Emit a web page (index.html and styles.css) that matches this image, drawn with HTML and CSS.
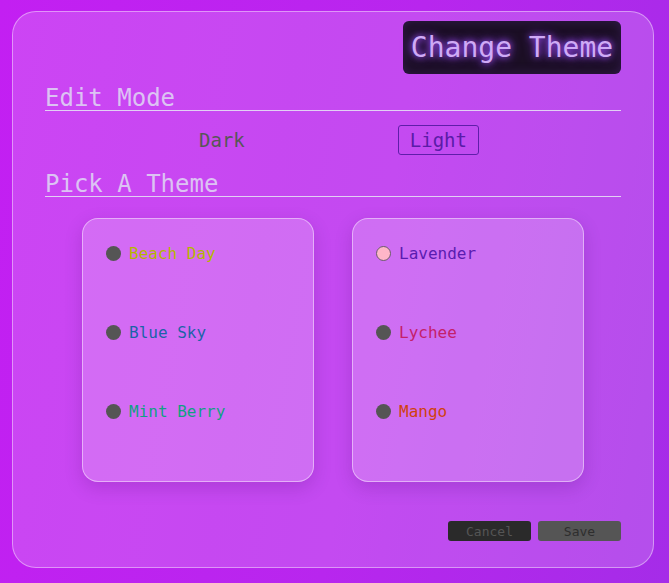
FILE: index.html
```html
<!DOCTYPE html>
<html>
<head>
<meta charset="utf-8">
<link rel="stylesheet" href="styles.css">
</head>
<body>
<div class="panel">
  <div class="top">
    <button class="change">Change Theme</button>
  </div>
  <h2 class="heading">Edit Mode</h2>
  <div class="modes">
    <button class="mode">Dark</button>
    <button class="mode active">Light</button>
  </div>
  <h2 class="heading pick">Pick A Theme</h2>
  <div class="cards">
    <div class="card">
      <div class="item"><span class="dot"></span><span class="beach">Beach Day</span></div>
      <div class="item"><span class="dot"></span><span class="sky">Blue Sky</span></div>
      <div class="item"><span class="dot"></span><span class="mint">Mint Berry</span></div>
    </div>
    <div class="card">
      <div class="item"><span class="dot sel"></span><span class="lav">Lavender</span></div>
      <div class="item"><span class="dot"></span><span class="lychee">Lychee</span></div>
      <div class="item"><span class="dot"></span><span class="mango">Mango</span></div>
    </div>
  </div>
  <div class="footer">
    <button class="btn cancel">Cancel</button>
    <button class="btn save">Save</button>
  </div>
</div>
</body>
</html>
```
FILE: styles.css
```css
* { box-sizing: border-box; }
html, body { height: 100%; }
body {
  margin: 0;
  padding: 11px 15px 15px 12px;
  background: linear-gradient(100deg, #c31ff2 0%, #b826ee 55%, #a52ce8 100%);
  font-family: "DejaVu Sans Mono", "Liberation Mono", monospace;
}
.panel {
  height: 557px;
  border: 1px solid rgba(255,255,255,0.42);
  border-radius: 24px;
  background: rgba(255,255,255,0.17);
  padding: 9px 32px 26px;
  display: flex;
  flex-direction: column;
}
.top { display: flex; justify-content: flex-end; }
button { font-family: inherit; cursor: pointer; }
.change {
  width: 218px;
  height: 53px;
  border: none;
  border-radius: 6px;
  background: #1b0f24;
  color: #cfaaf6;
  font-size: 28px;
  padding: 0;
  text-shadow: 0 0 6px #a552ff, 0 0 12px #8a3af0;
  box-shadow: inset 0 0 12px rgba(120,60,200,0.25);
}
.heading {
  margin: 12px 0 0;
  font-weight: normal;
  font-size: 24px;
  line-height: 24px;
  color: #dcc3f3;
  border-bottom: 1px solid #e2d0f4;
}
.modes {
  display: flex;
  justify-content: center;
  gap: 141px;
  margin-top: 14px;
}
.mode {
  height: 30px;
  padding: 0 11px;
  font-size: 19px;
  background: transparent;
  border: 1px solid transparent;
  border-radius: 3px;
  color: #575757;
}
.mode.active {
  color: #5a1ca8;
  border-color: #5f1eaa;
}
.heading.pick { margin-top: 17px; }
.cards {
  display: flex;
  justify-content: center;
  gap: 38px;
  margin-top: 21px;
}
.card {
  width: 232px;
  height: 264px;
  border: 1px solid rgba(255,255,255,0.45);
  border-radius: 16px;
  background: rgba(255,255,255,0.2);
  box-shadow: 0 6px 18px rgba(60,0,100,0.18);
  padding: 24px 0 0 23px;
  display: flex;
  flex-direction: column;
  gap: 59px;
}
.item {
  display: flex;
  align-items: center;
  height: 20px;
  font-size: 16px;
  gap: 8px;
}
.dot {
  width: 15px;
  height: 15px;
  border-radius: 50%;
  background: #555555;
}
.dot.sel {
  background: #ffb6c8;
  border: 1px solid #6a5a6a;
}
.beach { color: #b4b800; }
.sky { color: #1b63a8; }
.mint { color: #11a083; }
.lav { color: #5a1cb0; }
.lychee { color: #c4206a; }
.mango { color: #d0400e; }
.footer {
  margin-top: auto;
  display: flex;
  justify-content: flex-end;
  gap: 7px;
}
.btn {
  width: 83px;
  height: 20px;
  border: none;
  border-radius: 3px;
  font-size: 13px;
  padding: 0;
}
.cancel { background: #2a2a2a; color: #555555; }
.save { background: #555555; color: #2e2e2e; }
```
